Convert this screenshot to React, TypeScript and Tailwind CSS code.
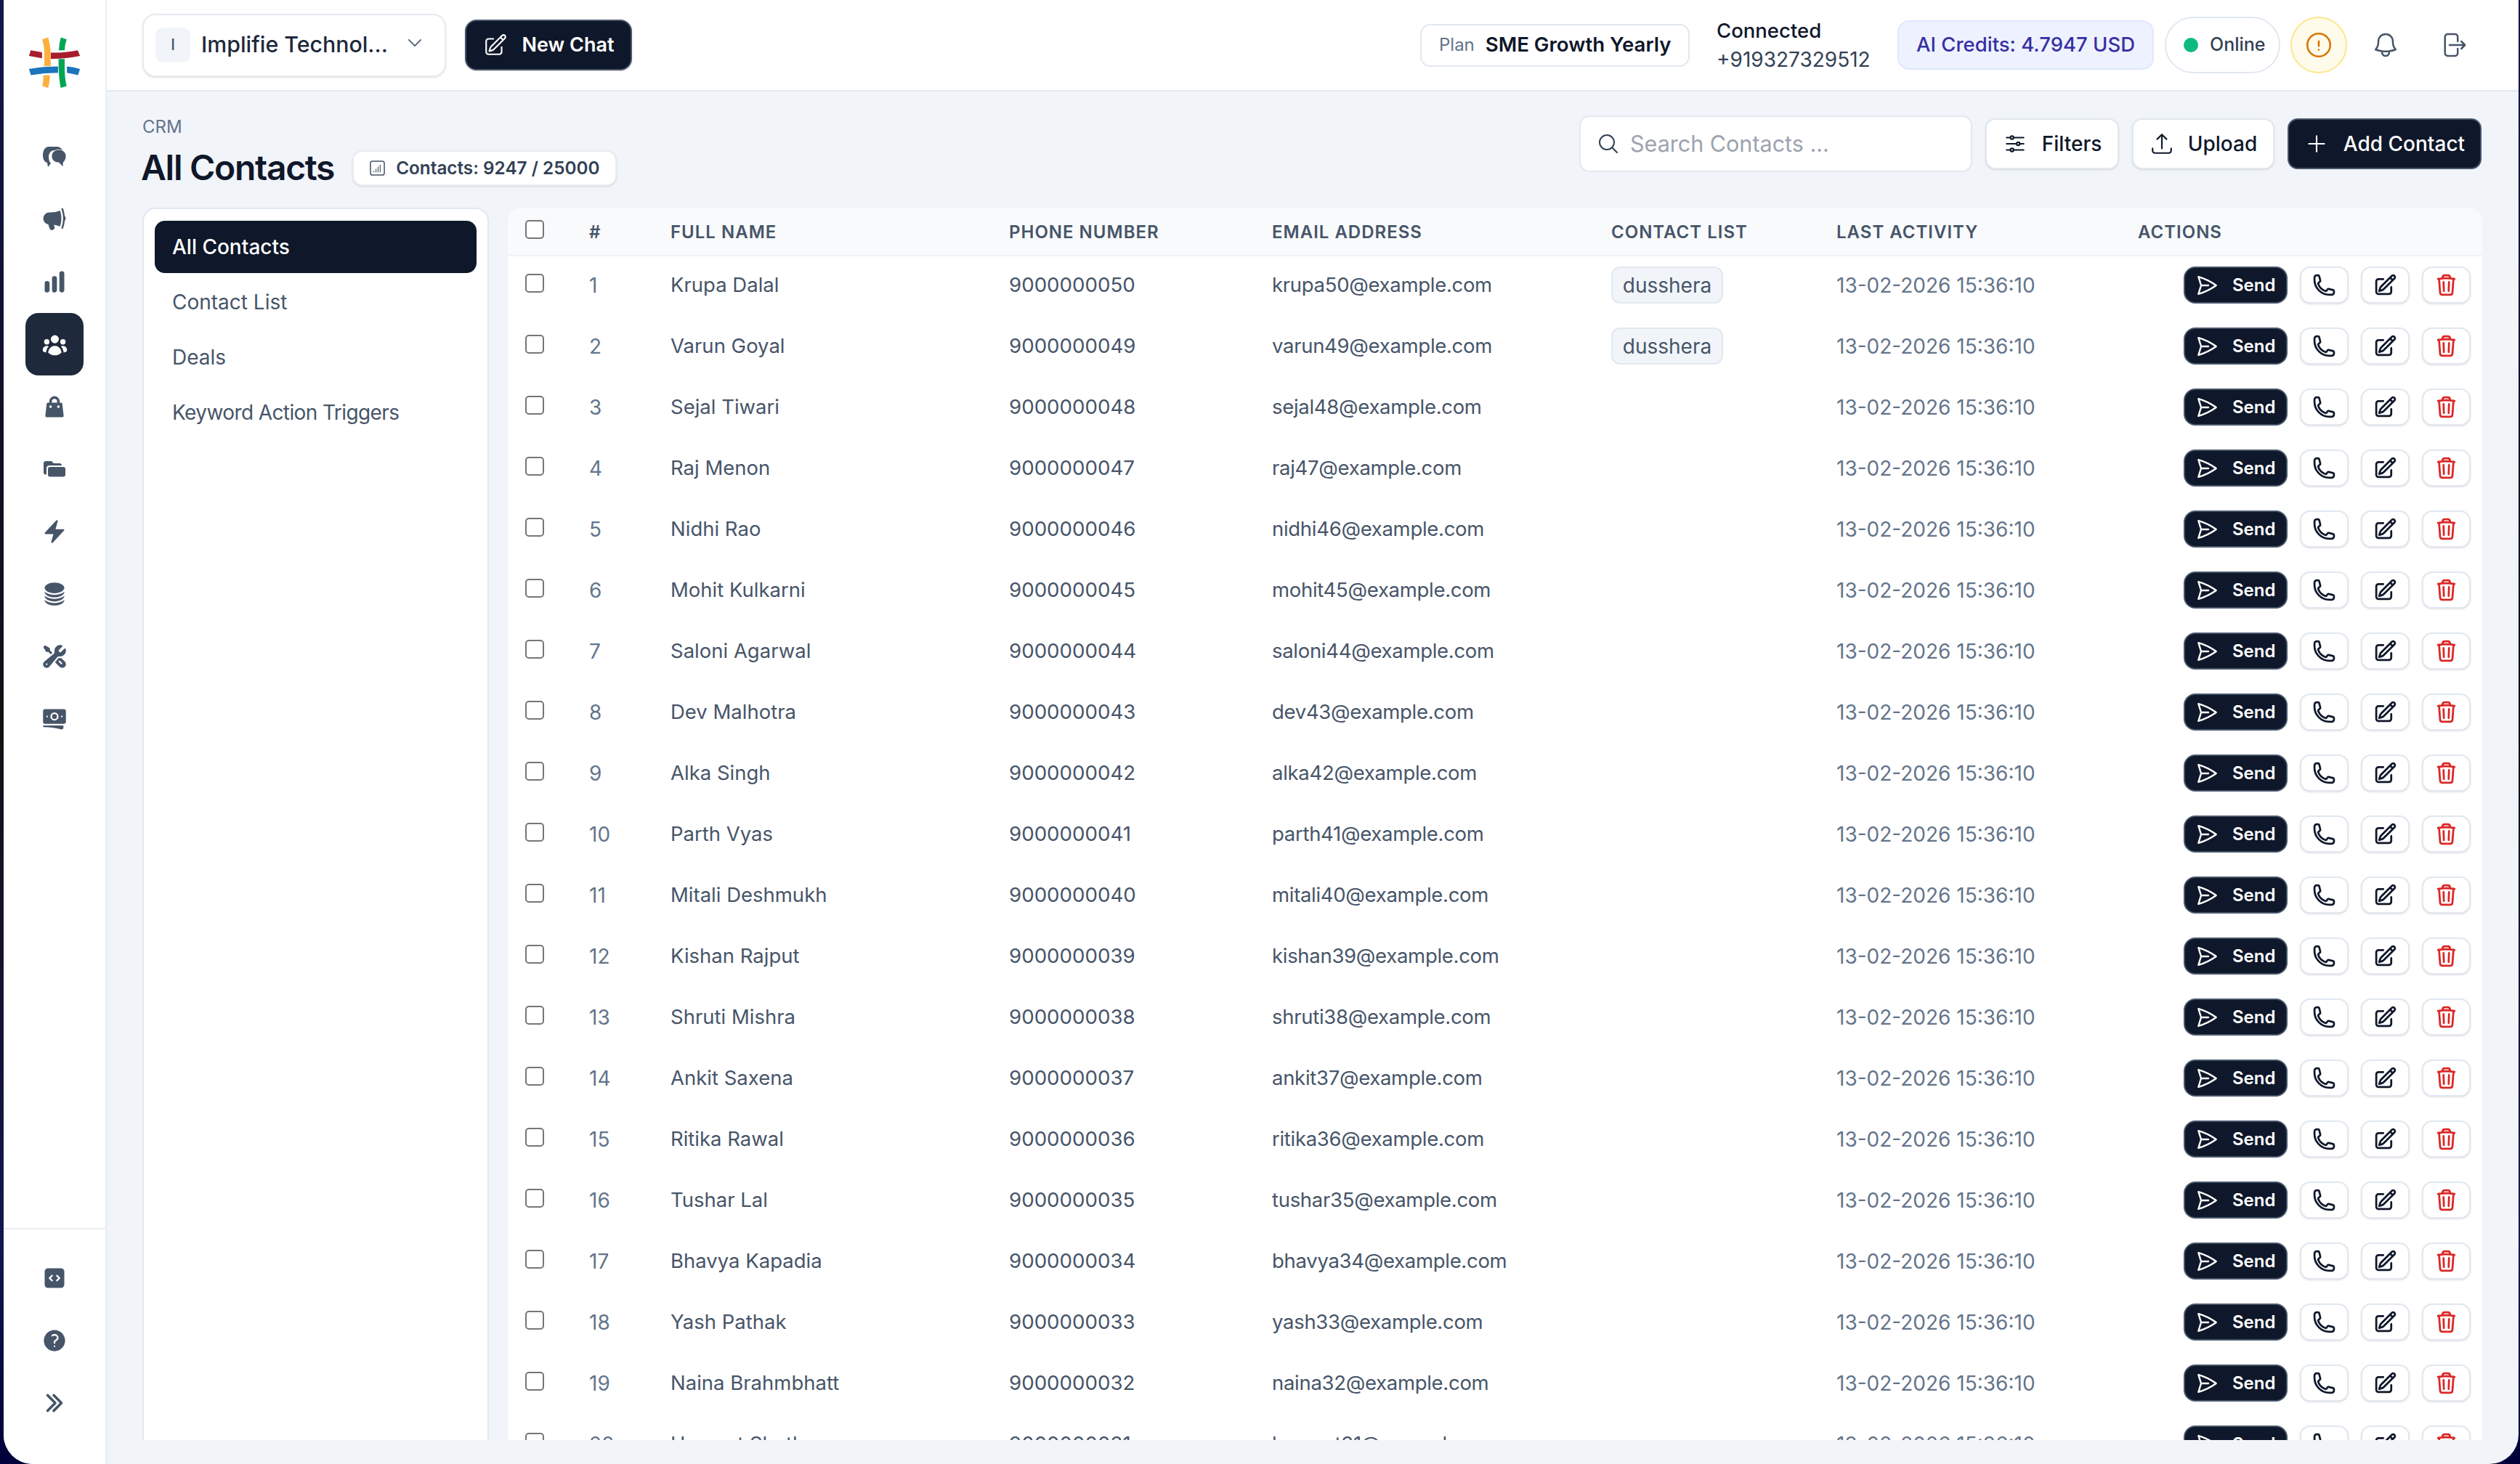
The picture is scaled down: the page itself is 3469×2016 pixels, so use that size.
import React from "react";
import {
  HiMegaphone, HiChartBar, HiMiniUserGroup, HiBolt, HiCircleStack,
  HiWrenchScrewdriver, HiBanknotes, HiCodeBracketSquare, HiQuestionMarkCircle, HiChevronDoubleRight,
  HiOutlinePencilSquare, HiOutlineChevronDown, HiOutlineBell, HiOutlineArrowRightStartOnRectangle,
  HiOutlineExclamationCircle, HiOutlineMagnifyingGlass, HiOutlineAdjustmentsHorizontal, HiOutlineArrowUpTray,
  HiOutlinePlus, HiOutlinePaperAirplane, HiOutlinePhone, HiOutlineTrash,
} from "react-icons/hi2";
import { HiShoppingBag } from "react-icons/hi";

const contacts: [string, string][] = [
  ["Krupa Dalal", "krupa50"], ["Varun Goyal", "varun49"], ["Sejal Tiwari", "sejal48"], ["Raj Menon", "raj47"],
  ["Nidhi Rao", "nidhi46"], ["Mohit Kulkarni", "mohit45"], ["Saloni Agarwal", "saloni44"], ["Dev Malhotra", "dev43"],
  ["Alka Singh", "alka42"], ["Parth Vyas", "parth41"], ["Mitali Deshmukh", "mitali40"], ["Kishan Rajput", "kishan39"],
  ["Shruti Mishra", "shruti38"], ["Ankit Saxena", "ankit37"], ["Ritika Rawal", "ritika36"], ["Tushar Lal", "tushar35"],
  ["Bhavya Kapadia", "bhavya34"], ["Yash Pathak", "yash33"], ["Naina Brahmbhatt", "naina32"], ["Hemant Sheth", "hemant31"],
];

const cols = "grid grid-cols-[112px_112px_466px_362px_467px_310px_415px_474px]";

function Logo() {
  return (
    <svg viewBox="0 0 450 420" className="w-[150px] h-[140px]">
      <path fill="#fbb040" d="M171 95 197 86Q208 125 208 155V213H180V155Q180 125 171 95Z" />
      <path fill="#fbb040" d="M176 253H205Q205 285 197 310L171 302Q177 278 176 253Z" />
      <path fill="#a61e2d" d="M120 143 170 152V179L112 168Z" />
      <path fill="#a61e2d" d="M209 154Q270 155 328 143L338 168Q270 182 209 181Z" />
      <path fill="#00a651" d="M253 86 279 95Q270 120 270 143H244Q245 115 253 86Z" />
      <path fill="#00a651" d="M243 182H270V215Q270 270 279 302L253 310Q243 270 243 182Z" />
      <path fill="#1b75bc" d="M112 226Q175 215 241 215V243Q180 243 121 253Z" />
      <path fill="#1b75bc" d="M280 215Q310 218 338 226L329 253Q305 247 280 243Z" />
    </svg>
  );
}

function ChatIcon() {
  return (
    <svg viewBox="0 0 33 28" className="w-[33px] h-[28px] text-[#475569]" fill="currentColor">
      <path d="M8 0h10c5 0 8 2 9 5H16c-5 0-8 4-8 9 0 4 1 7 3 9l-4 5-1-6C2 21 0 17 0 12 0 5 3 0 8 0Z" />
      <path d="M22 4c6 0 10 4 10 9 0 4-2 7-4 9v6l-6-6c-6 0-10-4-10-9s4-9 10-9Z" stroke="#fff" strokeWidth="0.8" />
    </svg>
  );
}

function FoldersIcon() {
  return (
    <svg viewBox="0 0 30 22" className="w-[30px] h-[22px] text-[#475569]" fill="currentColor">
      <path d="M3 0h8l3 3h8a3 3 0 0 1 3 3H8a4 4 0 0 0-4 4v8.5H3a3 3 0 0 1-3-3V3a3 3 0 0 1 3-3Z" />
      <rect x="6" y="8" width="24" height="13.5" rx="3" />
    </svg>
  );
}

function StatsIcon() {
  return (
    <svg viewBox="0 0 22 22" className="w-[21px] h-[21px] text-[#475569] shrink-0" fill="none" stroke="currentColor">
      <rect x="1" y="1" width="20" height="20" rx="3" strokeWidth="1.6" />
      <path d="M6 17v-2M9 17v-5M12 17V9M15 17V6" strokeWidth="1.2" />
    </svg>
  );
}

const slot = "h-[86px] flex items-center justify-center";
const side = "w-[36px] h-[36px] text-[#475569]";

function Sidebar() {
  return (
    <aside className="w-[142px] shrink-0 h-full bg-white border-r-2 border-[#e8ecf2] flex flex-col items-center">
      <div className="h-[173px] w-full flex items-start justify-center pt-[20px]">
        <Logo />
      </div>
      <nav className="flex flex-col items-center w-full flex-1">
        <div className={slot}><ChatIcon /></div>
        <div className={slot}><HiMegaphone className="w-[38px] h-[38px] text-[#475569]" /></div>
        <div className={slot}><HiChartBar className={side} /></div>
        <div className={slot + " w-[80px] bg-[#1e293b] rounded-[18px]"}>
          <HiMiniUserGroup className="w-[37px] h-[37px] text-white" />
        </div>
        <div className={slot}><HiShoppingBag className={side} /></div>
        <div className={slot}><FoldersIcon /></div>
        <div className={slot}><HiBolt className={side} /></div>
        <div className={slot}><HiCircleStack className={side} /></div>
        <div className={slot}><HiWrenchScrewdriver className={side} /></div>
        <div className={slot}><HiBanknotes className={side} /></div>
      </nav>
      <div className="w-full border-t-2 border-[#e8ecf2] pt-[24px] pb-[41px] flex flex-col items-center">
        <div className={slot}><HiCodeBracketSquare className={side} /></div>
        <div className={slot}><HiQuestionMarkCircle className={side} /></div>
        <div className={slot}><HiChevronDoubleRight className="w-[34px] h-[34px] text-[#475569] stroke-[1px]" /></div>
      </div>
    </aside>
  );
}

function Header() {
  return (
    <header className="h-[126px] shrink-0 bg-white border-b-2 border-[#e2e8f0] flex items-center pl-[49px]">
      <div className="w-[418px] h-[87px] bg-white border-2 border-[#e7ebf1] rounded-[18px] shadow-sm flex items-center pl-[16px] pr-[28px]">
        <div className="w-[48px] h-[48px] rounded-[10px] bg-[#f1f5f9] flex items-center justify-center text-[21px] font-medium text-[#475569]">I</div>
        <span className="ml-[15px] text-[30.3px] font-medium text-[#1e293b] flex-1 whitespace-nowrap">Implifie Technol...</span>
        <HiOutlineChevronDown className="w-[26px] h-[26px] text-[#475569] mb-[6px]" />
      </div>
      <button className="ml-[26px] w-[230px] h-[70px] bg-[#0f172a] border-2 border-[#475569] rounded-[16px] flex items-center justify-center gap-[20px] text-white text-[27px] font-semibold shadow-sm">
        <HiOutlinePencilSquare className="w-[34px] h-[34px]" />
        <span>New Chat</span>
      </button>
      <div className="flex-1" />
      <div className="h-[59px] w-[371px] bg-white border-2 border-[#e2e8f0] rounded-[14px] flex items-center pl-[24px] gap-[15px] whitespace-nowrap">
        <span className="text-[24px] text-[#64748b]">Plan</span>
        <span className="text-[27.6px] font-semibold text-[#0f172a]">SME Growth Yearly</span>
      </div>
      <div className="ml-[37px] w-[249px] flex flex-col gap-[8px]">
        <span className="text-[27.5px] leading-[32px] font-medium text-[#0f172a]">Connected</span>
        <span className="text-[28px] leading-[32px] text-[#334155]">+919327329512</span>
      </div>
      <div className="h-[68px] w-[353px] bg-[#eef2ff] border-2 border-[#e0e7ff] rounded-[16px] flex items-center justify-center text-[27.5px] font-medium text-[#3730a3] whitespace-nowrap">
        AI Credits: 4.7947 USD
      </div>
      <div className="ml-[15px] h-[78px] w-[159px] bg-white border-2 border-[#e2e8f0] rounded-full flex items-center pl-[24px] gap-[16px]">
        <span className="w-[20px] h-[20px] rounded-full bg-[#10b981]" />
        <span className="text-[25px] font-medium text-[#334155]">Online</span>
      </div>
      <div className="ml-[14px] h-[78px] w-[78px] bg-[#fffbeb] border-2 border-[#fde68a] rounded-full flex items-center justify-center">
        <HiOutlineExclamationCircle className="w-[42px] h-[42px] text-[#d97706]" />
      </div>
      <div className="w-[106px] flex justify-center"><HiOutlineBell className="w-[40px] h-[40px] text-[#475569]" /></div>
      <div className="w-[80px] flex justify-center"><HiOutlineArrowRightStartOnRectangle className="w-[40px] h-[40px] text-[#475569] -scale-x-100 rotate-180" /></div>
      <div className="w-[50px]" />
    </header>
  );
}

function PageTop() {
  return (
    <div className="h-[160px] shrink-0 flex justify-between items-start pt-[33px]">
      <div>
        <div className="text-[24px] leading-[32px] text-[#64748b]">CRM</div>
        <div className="mt-[13px] flex items-center gap-[25px] h-[54px]">
          <h1 className="-ml-[2px] text-[48px] font-semibold tracking-[-1.3px] text-[#0f172a] leading-[54px] whitespace-nowrap">All Contacts</h1>
          <div className="h-[49px] w-[364px] bg-white rounded-[14px] border-2 border-[#e9edf3] shadow-sm flex items-center pl-[22px] gap-[15px]">
            <StatsIcon />
            <span className="text-[24.3px] font-semibold text-[#334155] whitespace-nowrap">Contacts: 9247 / 25000</span>
          </div>
        </div>
      </div>
      <div className="flex items-center h-[78px] mr-[1px]">
        <div className="w-[541px] h-[78px] bg-white border-2 border-[#e2e8f0] rounded-[14px] flex items-center pl-[22px]">
          <HiOutlineMagnifyingGlass className="w-[32px] h-[32px] text-[#334155] shrink-0" />
          <input className="ml-[14px] flex-1 outline-none text-[30.5px] bg-transparent placeholder:text-[#9ca3af]" placeholder="Search Contacts ..." />
        </div>
        <button className="ml-[18px] w-[184px] h-[70px] bg-white border-2 border-[#e2e8f0] rounded-[14px] shadow-sm flex items-center justify-center gap-[20px] text-[28px] font-medium text-[#0f172a]">
          <HiOutlineAdjustmentsHorizontal className="w-[34px] h-[34px]" />Filters
        </button>
        <button className="ml-[18px] w-[196px] h-[70px] bg-white border-2 border-[#e2e8f0] rounded-[14px] shadow-sm flex items-center justify-center gap-[19px] text-[28px] font-medium text-[#0f172a]">
          <HiOutlineArrowUpTray className="w-[34px] h-[34px]" />Upload
        </button>
        <button className="ml-[18px] w-[267px] h-[70px] bg-[#0f172a] border-2 border-[#475569] rounded-[14px] flex items-center justify-center gap-[20px] text-[28px] font-medium text-white">
          <HiOutlinePlus className="w-[34px] h-[34px]" />Add Contact
        </button>
      </div>
    </div>
  );
}

function LeftPanel() {
  return (
    <div className="w-[477px] shrink-0 h-full bg-white border-2 border-b-0 border-[#e2e8f0] rounded-t-[18px] px-[15px] pt-[16px] flex flex-col gap-[4px]">
      <div className="h-[72px] bg-[#0f172a] rounded-[14px] flex items-center pl-[24px] text-[28px] font-medium text-white">All Contacts</div>
      <div className="h-[72px] flex items-center pl-[24px] text-[28px] text-[#475569]">Contact List</div>
      <div className="h-[72px] flex items-center pl-[24px] text-[28px] text-[#475569]">Deals</div>
      <div className="h-[72px] flex items-center pl-[24px] text-[28px] tracking-[-0.6px] text-[#475569]">Keyword Action Triggers</div>
    </div>
  );
}

function Check() {
  return <input type="checkbox" className="appearance-none block w-[26px] h-[26px] border-2 border-[#767676] rounded-[5px] bg-white ml-[24px] mb-[5px]" />;
}

const iconBtn = "w-[67px] h-[51px] bg-white border-2 border-[#e2e8f0] rounded-[14px] flex items-center justify-center shadow-sm";

function Row({ i, name, mail }: { i: number; name: string; mail: string }) {
  return (
    <div className={cols + " h-[84px] items-center pb-[5px] text-[28px] bg-white"}>
      <div><Check /></div>
      <div className="text-[#64748b]">{i + 1}</div>
      <div className="text-[27.5px] text-[#475569]">{name}</div>
      <div className="text-[27.7px] text-[#475569]">{9000000050 - i}</div>
      <div className="text-[27.5px] tracking-[-0.3px] text-[#475569]">{mail}@example.com</div>
      <div>
        {i < 2 && (
          <span className="inline-flex items-center justify-center w-[154px] h-[51px] bg-[#f1f5f9] border-2 border-[#e2e8f0] rounded-[12px] text-[#475569]">dusshera</span>
        )}
      </div>
      <div className="text-[#64748b]">13-02-2026 15:36:10</div>
      <div className="flex items-center pl-[63px] gap-[17px]">
        <button className="w-[143px] h-[51px] bg-[#0f172a] border-2 border-[#475569] rounded-[16px] flex items-center pl-[14px] gap-[19px] text-white text-[24px] font-semibold">
          <HiOutlinePaperAirplane className="w-[32px] h-[32px]" strokeWidth={1.8} />Send
        </button>
        <button className={iconBtn}><HiOutlinePhone className="w-[33px] h-[33px] text-[#0f172a]" strokeWidth={2} /></button>
        <button className={iconBtn}><HiOutlinePencilSquare className="w-[33px] h-[33px] text-[#0f172a]" strokeWidth={2} /></button>
        <button className={iconBtn}><HiOutlineTrash className="w-[33px] h-[33px] text-[#dc2626]" strokeWidth={2} /></button>
      </div>
    </div>
  );
}

function Table() {
  const heads = ["#", "FULL NAME", "PHONE NUMBER", "EMAIL ADDRESS", "CONTACT LIST", "LAST ACTIVITY", "ACTIONS"];
  return (
    <div className="flex-1 min-w-0 h-full overflow-hidden bg-white rounded-t-[20px]">
      <div className={cols + " h-[67px] items-center bg-[#f8fafc] border-b-2 border-[#f1f3f5]"}>
        <div><Check /></div>
        {heads.map((h) => (
          <div key={h} className="pt-[2px] text-[24px] font-semibold tracking-[1px] text-[#475569] whitespace-nowrap">{h}</div>
        ))}
      </div>
      {contacts.map(([n, m], i) => <Row key={m} i={i} name={n} mail={m} />)}
    </div>
  );
}

export default function App() {
  return (
    <div className="w-[3469px] h-[2016px] overflow-hidden pl-[5px] pr-[2px] bg-[linear-gradient(180deg,#15164c_0%,#101028_30%,#141014_50%,#141650_85%,#00003a_100%)] font-['Inter',sans-serif]">
      <div className="w-full h-full flex rounded-b-[40px] overflow-hidden bg-[#f1f4f9]">
        <Sidebar />
        <main className="flex-1 min-w-0 h-full flex flex-col">
          <Header />
          <div className="flex-1 min-h-0 flex flex-col pl-[49px] pr-[50px] pb-[33px]">
            <PageTop />
            <div className="flex-1 min-h-0 flex gap-[26px]">
              <LeftPanel />
              <Table />
            </div>
          </div>
        </main>
      </div>
    </div>
  );
}
